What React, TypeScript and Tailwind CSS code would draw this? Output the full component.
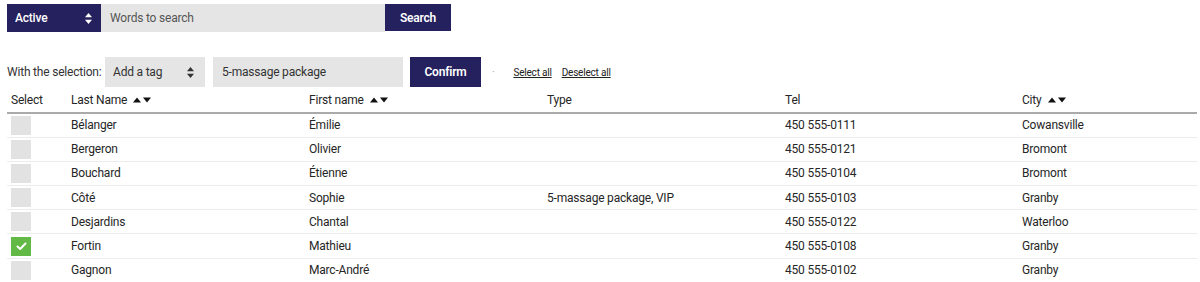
import React from "react";

const rows = [
  { last: "Bélanger", first: "Émilie", type: "", tel: "450 555-0111", city: "Cowansville", checked: false },
  { last: "Bergeron", first: "Olivier", type: "", tel: "450 555-0121", city: "Bromont", checked: false },
  { last: "Bouchard", first: "Étienne", type: "", tel: "450 555-0104", city: "Bromont", checked: false },
  { last: "Côté", first: "Sophie", type: "5-massage package, VIP", tel: "450 555-0103", city: "Granby", checked: false },
  { last: "Desjardins", first: "Chantal", type: "", tel: "450 555-0122", city: "Waterloo", checked: false },
  { last: "Fortin", first: "Mathieu", type: "", tel: "450 555-0108", city: "Granby", checked: true },
  { last: "Gagnon", first: "Marc-André", type: "", tel: "450 555-0102", city: "Granby", checked: false },
];

function SelectArrows({ color }: { color: string }) {
  return (
    <svg width="7" height="11" viewBox="0 0 7 11" fill={color}>
      <path d="M3.5 0 L7 4.2 L0 4.2 Z" />
      <path d="M0 6.8 L7 6.8 L3.5 11 Z" />
    </svg>
  );
}

function SortArrows() {
  return (
    <svg width="18" height="6" viewBox="0 0 18 6" fill="#111" className="ml-[6px]">
      <path d="M0 5.5 L4 0.5 L8 5.5 Z" />
      <path d="M10 0.5 L18 0.5 L14 5.5 Z" />
    </svg>
  );
}

export default function App() {
  return (
    <div
      className="w-[1200px] h-[282px] bg-white overflow-hidden text-[#262626] tracking-[-0.2px]"
      style={{ fontFamily: "Roboto, 'Liberation Sans', sans-serif" }}
    >
      <div className="flex pl-[7px] pt-[4px] h-[32px]">
        <div className="w-[94px] h-[28px] bg-[#25205e] flex items-center justify-between pl-[8px] pr-[9px] text-white text-[12px] font-medium">
          <span>Active</span>
          <SelectArrows color="#ffffff" />
        </div>
        <div className="w-[284px] h-[28px] bg-[#e5e5e5] flex items-center pl-[9px] text-[12px] text-[#555]">
          Words to search
        </div>
        <div className="w-[66px] h-[27px] bg-[#25205e] flex items-center justify-center text-white text-[12px] font-semibold">
          Search
        </div>
      </div>

      <div className="flex items-center pl-[7px] mt-[25px] h-[30px]">
        <span className="text-[12px] text-[#333] w-[98px] shrink-0 whitespace-nowrap">With the selection:</span>
        <div className="w-[100px] h-[30px] bg-[#e5e5e5] flex items-center justify-between pl-[8px] pr-[11px] text-[12px] text-[#333]">
          <span>Add a tag</span>
          <SelectArrows color="#333333" />
        </div>
        <div className="ml-[8px] w-[190px] h-[30px] bg-[#e5e5e5] flex items-center pl-[9px] text-[12px] text-[#333]">
          5-massage package
        </div>
        <div className="ml-[7px] w-[71px] h-[30px] bg-[#25205e] flex items-center justify-center text-white text-[12px] font-semibold">
          Confirm
        </div>
        <span className="ml-[11px] text-[10px] text-[#999]">·</span>
        <a className="ml-[19px] text-[10px] text-[#222] underline whitespace-nowrap">Select all</a>
        <a className="ml-[10px] text-[10px] text-[#222] underline whitespace-nowrap">Deselect all</a>
      </div>

      <table className="ml-[7px] mt-[1px] w-[1190px] border-collapse table-fixed text-[12px]">
        <colgroup>
          <col className="w-[60px]" />
          <col className="w-[238px]" />
          <col className="w-[238px]" />
          <col className="w-[238px]" />
          <col className="w-[237px]" />
          <col />
        </colgroup>
        <thead>
          <tr className="h-[25px] border-b-2 border-[#aaaaaa]">
            <th className="text-left font-normal pl-[4px] pb-[1px]">Select</th>
            <th className="text-left font-normal pl-[4px] pb-[1px]">
              <span className="inline-flex items-center">Last Name<SortArrows /></span>
            </th>
            <th className="text-left font-normal pl-[4px] pb-[1px]">
              <span className="inline-flex items-center">First name<SortArrows /></span>
            </th>
            <th className="text-left font-normal pl-[4px] pb-[1px]">Type</th>
            <th className="text-left font-normal pl-[4px] pb-[1px]">Tel</th>
            <th className="text-left font-normal pl-[4px] pb-[1px]">
              <span className="inline-flex items-center">City<SortArrows /></span>
            </th>
          </tr>
        </thead>
        <tbody>
          {rows.map((r) => (
            <tr key={r.last} className="h-[24.2px] border-b border-[#ececec]">
              <td className="pl-[4px] py-0 align-middle">
                {r.checked ? (
                  <div className="w-[20px] h-[19px] bg-[#63b946] flex items-center justify-center">
                    <svg width="11" height="9" viewBox="0 0 11 9" fill="none" stroke="white" strokeWidth="2" strokeLinecap="round" strokeLinejoin="round">
                      <path d="M1.5 4.5 L4.2 7 L9.5 1.5" />
                    </svg>
                  </div>
                ) : (
                  <div className="w-[20px] h-[19px] bg-[#e2e2e2]" />
                )}
              </td>
              <td className="pl-[4px]">{r.last}</td>
              <td className="pl-[4px]">{r.first}</td>
              <td className="pl-[4px]">{r.type}</td>
              <td className="pl-[4px]">{r.tel}</td>
              <td className="pl-[4px]">{r.city}</td>
            </tr>
          ))}
        </tbody>
      </table>
    </div>
  );
}
